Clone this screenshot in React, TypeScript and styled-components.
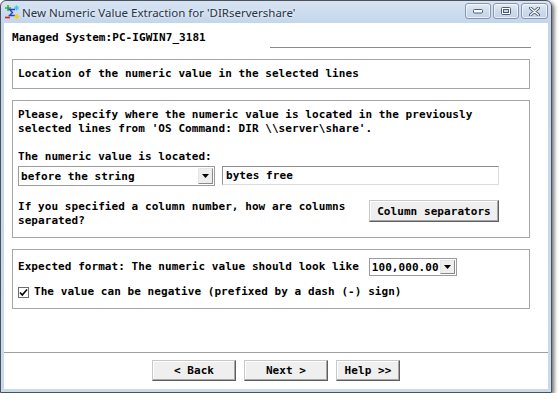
import styled, { createGlobalStyle } from "styled-components";

const GlobalStyle = createGlobalStyle`
  *, *::before, *::after { box-sizing: border-box; }
  html, body { margin: 0; padding: 0; background: #ffffff; }
  body { font-family: "DejaVu Sans Mono", "Liberation Mono", monospace; }
`;

const Window = styled.div`
  width: 552px;
  height: 393px;
  border: 1px solid #4d525a;
  border-radius: 6px 6px 0 0;
  background: linear-gradient(#d6e3f2, #c4d6ec 22px, #c9d9ee);
  box-shadow: 2px 2px 4px rgba(0, 0, 0, 0.6);
  padding: 0 3px 3px 3px;
  display: flex;
  flex-direction: column;
`;

const TitleBar = styled.div`
  height: 22px;
  display: flex;
  align-items: center;
  flex-shrink: 0;
`;

const TitleText = styled.span`
  margin-left: 2px;
  font-family: "Noto Sans", "Open Sans", sans-serif;
  font-size: 11.5px;
  color: #2a3442;
  text-shadow: 0 0 4px #ffffff;
  white-space: nowrap;
`;

const Controls = styled.div`
  margin-left: auto;
  align-self: flex-start;
  margin-top: 2px;
  display: flex;
  gap: 2px;
`;

const CtrlButton = styled.div<{ $w: number }>`
  width: ${(p) => p.$w}px;
  height: 16px;
  border: 1px solid #8796ad;
  border-radius: 3px;
  background: linear-gradient(#e4ecf6, #cddbec 50%, #c3d3e8);
  box-shadow: inset 0 0 0 1px rgba(255, 255, 255, 0.6);
  display: flex;
  align-items: center;
  justify-content: center;
`;

const Client = styled.div`
  flex: 1;
  background: #ffffff;
  display: flex;
  flex-direction: column;
`;

const HeaderLabel = styled.div`
  margin: 8px 0 0 8px;
  line-height: 13px;
  font-size: 11px;
  letter-spacing: 0.06px;
  font-weight: bold;
  color: #000;
`;

const HeaderRule = styled.div`
  margin: 3px 17px 0 266px;
  height: 1px;
  background: #8a8a8a;
`;

const Panel = styled.div<{ $pad: string }>`
  margin: 11px 0 0 8px;
  width: 518px;
  border: 1px solid #a6a6a6;
  padding: ${(p) => p.$pad};
  display: flex;
  flex-direction: column;
`;

const Text = styled.div<{ $mt?: number }>`
  margin-top: ${(p) => p.$mt ?? 0}px;
  font-size: 11px;
  letter-spacing: 0.06px;
  line-height: 14px;
  font-weight: bold;
  color: #000;
  white-space: nowrap;
`;

const Row = styled.div<{ $mt?: number; $gap?: number; $align?: string }>`
  margin-top: ${(p) => p.$mt ?? 0}px;
  display: flex;
  align-items: ${(p) => p.$align ?? "center"};
  gap: ${(p) => p.$gap ?? 0}px;
`;

const Combo = styled.div<{ $w: number; $h: number }>`
  width: ${(p) => p.$w}px;
  height: ${(p) => p.$h}px;
  border: 1px solid #9c9c9c;
  background: #fff;
  display: flex;
  align-items: center;
  padding: 0 1px 0 2px;
  flex-shrink: 0;
  font-size: 11px;
  letter-spacing: 0.06px;
  font-weight: bold;
  color: #000;
`;

const ComboValue = styled.span`
  flex: 1;
  white-space: nowrap;
`;

const ComboArrow = styled.div<{ $h: number }>`
  width: 15px;
  height: ${(p) => p.$h}px;
  border: 1px solid;
  border-color: #e6e6e6 #8a8a8a #8a8a8a #e6e6e6;
  background: #eeeeee;
  display: flex;
  align-items: center;
  justify-content: center;
`;

const TextField = styled.div`
  flex: 1;
  height: 19px;
  align-self: flex-start;
  border: 1px solid;
  border-color: #8e8e8e #dcdcdc #dcdcdc #8e8e8e;
  padding: 0 3px;
  display: flex;
  align-items: center;
  font-size: 11px;
  letter-spacing: 0.06px;
  font-weight: bold;
  color: #000;
`;

const PushButton = styled.button<{ $w: number; $h: number }>`
  width: ${(p) => p.$w}px;
  height: ${(p) => p.$h}px;
  flex-shrink: 0;
  margin: 0;
  padding: 0;
  border: 1px solid;
  border-color: #c8c8c8 #5e5e5e #5e5e5e #c8c8c8;
  box-shadow: inset -1px -1px 0 #a8a8a8, inset 1px 1px 0 #ffffff;
  background: #efefef;
  font-family: "DejaVu Sans Mono", "Liberation Mono", monospace;
  font-size: 11px;
  letter-spacing: 0.06px;
  font-weight: bold;
  color: #000;
`;

const CheckBox = styled.div`
  width: 11px;
  height: 11px;
  border: 1px solid #6e6e6e;
  background: #fff;
  display: flex;
  align-items: center;
  justify-content: center;
`;

const Footer = styled.div`
  margin-top: auto;
  border-top: 1px solid #a0a0a0;
  box-shadow: inset 0 1px 0 #ffffff;
  padding: 7px 0 8px;
  display: flex;
  justify-content: center;
  gap: 8px;
`;

const AppIcon = () => (
  <svg width="16" height="16" viewBox="0 0 16 16">
    <path d="M1 4h6M4 1v6" stroke="#2fb52f" strokeWidth="1.6" />
    <path d="M10 4h5M12.5 1.5v5M10.8 2.2l3.4 3.6M14.2 2.2l-3.4 3.6" stroke="#35c6e8" strokeWidth="1" />
    <path d="M11 5.5H5.5l3 3-3 3H11" stroke="#2a3fd0" strokeWidth="1.4" fill="none" />
    <path d="M1 13.5h5" stroke="#e02020" strokeWidth="1.6" />
    <path d="M10 12.5h5M12.5 10v5M10.8 10.8l3.4 3.4M14.2 10.8l-3.4 3.4" stroke="#f2d21a" strokeWidth="1.2" />
  </svg>
);

const Arrow = () => (
  <svg width="7" height="4" viewBox="0 0 7 4">
    <path d="M0 0h7L3.5 4z" fill="#000" />
  </svg>
);

export default function App() {
  return (
    <>
      <GlobalStyle />
      <Window>
        <TitleBar>
          <AppIcon />
          <TitleText>New Numeric Value Extraction for 'DIRservershare'</TitleText>
          <Controls>
            <CtrlButton $w={26}>
              <svg width="10" height="5" viewBox="0 0 10 5">
                <rect x="0.5" y="0.5" width="9" height="3.5" rx="1" fill="#ffffff" stroke="#4e5d73" />
              </svg>
            </CtrlButton>
            <CtrlButton $w={26}>
              <svg width="10" height="8" viewBox="0 0 10 8">
                <rect x="0.5" y="0.5" width="9" height="7" rx="1" fill="#ffffff" stroke="#4e5d73" />
                <rect x="2.5" y="2.5" width="5" height="3" fill="#c9d6e7" stroke="#4e5d73" />
              </svg>
            </CtrlButton>
            <CtrlButton $w={27}>
              <svg width="11" height="9" viewBox="0 0 11 9">
                <path d="M1.5 1l8 7M9.5 1l-8 7" stroke="#4e5d73" strokeWidth="3" strokeLinecap="round" />
                <path d="M1.5 1l8 7M9.5 1l-8 7" stroke="#ffffff" strokeWidth="1.2" strokeLinecap="round" />
              </svg>
            </CtrlButton>
          </Controls>
        </TitleBar>
        <Client>
          <HeaderLabel>Managed System:PC-IGWIN7_3181</HeaderLabel>
          <HeaderRule />

          <Panel $pad="7px 5px">
            <Text>Location of the numeric value in the selected lines</Text>
          </Panel>

          <Panel $pad="7px 30px 9px 5px">
            <Text>Please, specify where the numeric value is located in the previously</Text>
            <Text>selected lines from 'OS Command: DIR \\server\share'.</Text>
            <Text $mt={14}>The numeric value is located:</Text>
            <Row $mt={2} $gap={7} $align="flex-start">
              <Combo $w={197} $h={20}>
                <ComboValue>before the string</ComboValue>
                <ComboArrow $h={16}>
                  <Arrow />
                </ComboArrow>
              </Combo>
              <TextField>bytes free</TextField>
            </Row>
            <Row $mt={14} $align="flex-start">
              <Text style={{ flex: 1 }}>
                If you specified a column number, how are columns
                <br />
                separated?
              </Text>
              <PushButton $w={130} $h={22}>Column separators</PushButton>
            </Row>
          </Panel>

          <Panel $pad="8px 5px 9px">
            <Row $gap={10}>
              <Text>Expected format: The numeric value should look like</Text>
              <Combo $w={88} $h={18}>
                <ComboValue>100,000.00</ComboValue>
                <ComboArrow $h={14}>
                  <Arrow />
                </ComboArrow>
              </Combo>
            </Row>
            <Row $mt={9} $gap={5}>
              <CheckBox>
                <svg width="9" height="9" viewBox="0 0 9 9">
                  <path d="M1 4.5l2.3 2.5L8 1.5" stroke="#000" strokeWidth="1.6" fill="none" />
                </svg>
              </CheckBox>
              <Text>The value can be negative (prefixed by a dash (-) sign)</Text>
            </Row>
          </Panel>

          <Footer>
            <PushButton $w={84} $h={21}>&lt; Back</PushButton>
            <PushButton $w={84} $h={21}>Next &gt;</PushButton>
            <PushButton $w={64} $h={21}>Help &gt;&gt;</PushButton>
          </Footer>
        </Client>
      </Window>
    </>
  );
}
